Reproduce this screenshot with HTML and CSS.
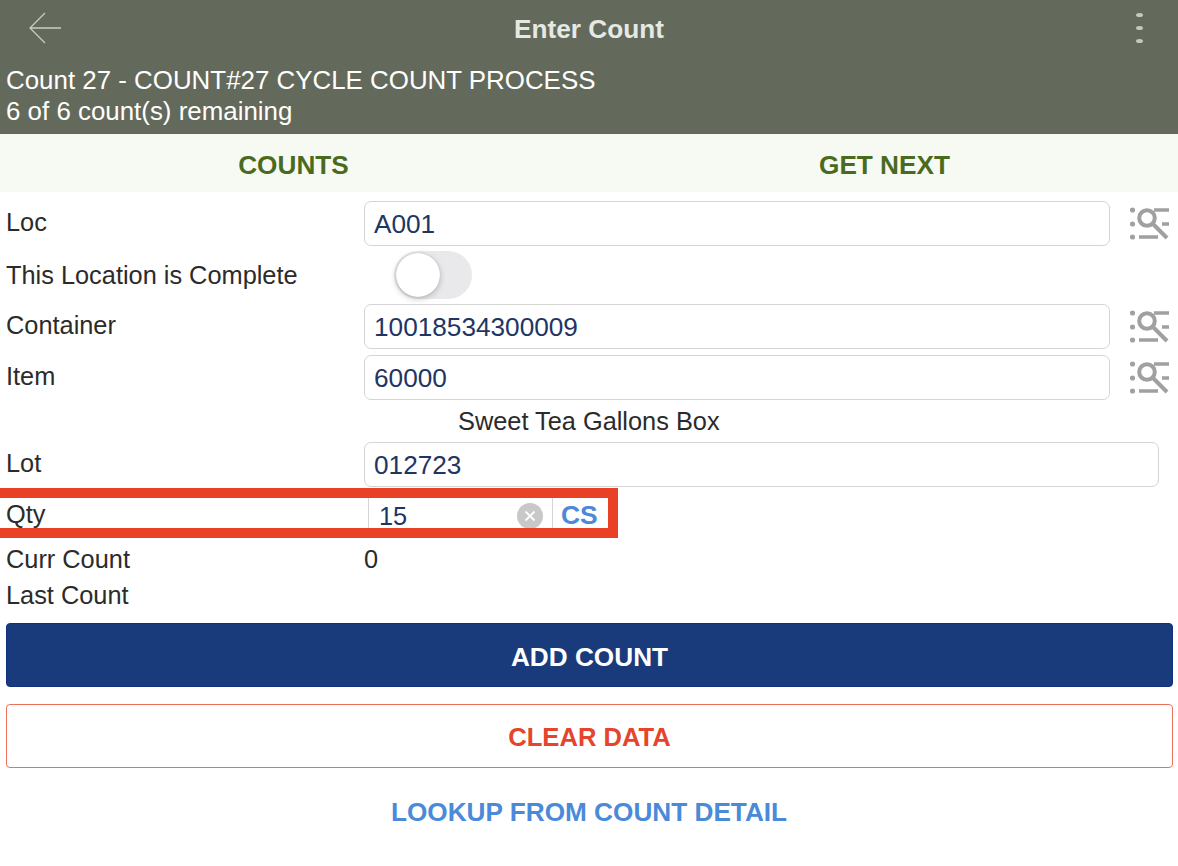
FILE: index.html
```html
<!DOCTYPE html>
<html lang="en">
<head>
<meta charset="utf-8">
<title>Enter Count</title>
<link rel="stylesheet" href="styles.css">
</head>
<body>
<header class="header">
  <div class="topbar">
    <svg class="back" width="33" height="32" viewBox="0 0 33 32"><path d="M16 1 L1 16 L16 31 M1 16 H32" fill="none" stroke="#c9ccc5" stroke-width="1.3"/></svg>
    <div class="title">Enter Count</div>
    <div class="dots"><span></span><span></span><span></span></div>
  </div>
  <div class="subtitle">Count 27 - COUNT#27 CYCLE COUNT PROCESS<br>6 of 6 count(s) remaining</div>
</header>
<nav class="tabs"><div class="tab tab-a">COUNTS</div><div class="tab tab-b">GET NEXT</div></nav>
<main class="form">
  <div class="row row-loc">
    <label class="label">Loc</label>
    <div class="input">A001</div>
    <svg class="search" width="40" height="36" viewBox="0 0 40 36"><use href="#lookup"/></svg>
  </div>
  <div class="row row-toggle">
    <label class="label">This Location is Complete</label>
    <div class="toggle"><div class="knob"></div></div>
  </div>
  <div class="row row-container">
    <label class="label">Container</label>
    <div class="input">10018534300009</div>
    <svg class="search" width="40" height="36" viewBox="0 0 40 36"><use href="#lookup"/></svg>
  </div>
  <div class="row row-item">
    <label class="label">Item</label>
    <div class="input">60000</div>
    <svg class="search" width="40" height="36" viewBox="0 0 40 36"><use href="#lookup"/></svg>
  </div>
  <div class="desc">Sweet Tea Gallons Box</div>
  <div class="row row-lot">
    <label class="label">Lot</label>
    <div class="input input-wide">012723</div>
  </div>
  <div class="row row-qty">
    <label class="label">Qty</label>
    <div class="qty-field">
      <span class="qty-value">15</span>
      <svg class="clear" width="26" height="26" viewBox="0 0 26 26"><circle cx="13" cy="13" r="13" fill="#c8c8c8"/><path d="M8.5 8.5 L17.5 17.5 M17.5 8.5 L8.5 17.5" stroke="#fff" stroke-width="1.8"/></svg>
    </div>
    <div class="uom">CS</div>
    <div class="highlight"></div>
  </div>
  <div class="info info-curr"><span class="label">Curr Count</span><span>0</span></div>
  <div class="info info-last"><span class="label">Last Count</span></div>
  <button class="btn btn-add">ADD COUNT</button>
  <button class="btn btn-clear">CLEAR DATA</button>
  <div class="lookup">LOOKUP FROM COUNT DETAIL</div>
</main>
<svg class="defs" width="0" height="0">
  <defs>
    <g id="lookup" fill="none" stroke="#a0a0a0">
      <circle cx="2.5" cy="5" r="2.6" fill="#a0a0a0" stroke="none"/>
      <circle cx="2.5" cy="19" r="2.6" fill="#a0a0a0" stroke="none"/>
      <circle cx="2.5" cy="32" r="2.6" fill="#a0a0a0" stroke="none"/>
      <circle cx="17" cy="13" r="7.8" stroke-width="4"/>
      <path d="M23 19 L37 33" stroke-width="4"/>
      <path d="M24 5 H39 M32 19 H39 M9 32 H28" stroke-width="3.4"/>
    </g>
  </defs>
</svg>
</body>
</html>
```
FILE: styles.css
```css
* { box-sizing: border-box; }
html, body { margin: 0; padding: 0; }
body {
  width: 1178px;
  height: 866px;
  overflow: hidden;
  background: #fff;
  font-family: "Liberation Sans", Arial, sans-serif;
  color: #2b2b2b;
  font-size: 25.35px;
}
.header { background: #636a5b; height: 134px; }
.topbar {
  height: 60px;
  display: flex;
  align-items: center;
  justify-content: space-between;
  padding: 0 34px 4px 29px;
}
.back { display: block; }
.title {
  flex: 1;
  text-align: center;
  color: #e6e8e3;
  font-weight: 700;
  font-size: 26.2px;
  padding: 3px 20px 0 0;
}
.dots { display: flex; flex-direction: column; gap: 9px; width: 8px; }
.dots span { display: block; width: 7px; height: 4px; border-radius: 50%; background: #c4c8c0; }
.subtitle {
  padding: 5px 6px 0;
  color: #fff;
  font-size: 25.9px;
  line-height: 31px;
}
.tabs {
  height: 58px;
  display: flex;
  background: #f7faf3;
  color: #4a6b1e;
  font-weight: 700;
  font-size: 26.2px;
  align-items: center;
  padding-top: 4px;
}
.tab { width: 50%; text-align: center; }
.tab-a { padding-right: 2px; }
.tab-b { padding-left: 2px; }
.form { padding: 0 6px; }
.row { display: flex; align-items: flex-start; position: relative; }
.label { display: block; width: 358px; flex: none; color: #2b2b2b; }
.row-loc { margin-top: 9px; height: 45px; }
.row-toggle { margin-top: 5px; height: 48px; align-items: center; }
.row-container { margin-top: 5px; height: 45px; }
.row-item { margin-top: 6px; height: 45px; }
.row .label { line-height: 42px; }
.input {
  width: 746px;
  height: 45px;
  border: 1px solid #d4d4d4;
  border-radius: 7px;
  padding: 1px 9px 0;
  line-height: 43px;
  font-size: 26.2px;
  color: #1f3564;
  background: #fff;
}
.input-wide { width: 795px; }
.search { margin-left: 20px; margin-top: 4px; flex: none; }
.toggle {
  width: 78px;
  height: 48px;
  margin-left: 30px;
  background: #e9e9eb;
  border-radius: 24px;
  padding: 2px;
}
.knob {
  width: 44px;
  height: 44px;
  background: #fff;
  border-radius: 50%;
  box-shadow: 0 2px 6px rgba(0, 0, 0, .22), 0 0 1px rgba(0, 0, 0, .25);
}
.desc { margin: 0 0 0 452px; padding-top: 5px; height: 42px; line-height: 32px; color: #2b2b2b; }
.row-qty { margin-top: 11px; height: 30px; align-items: center; }
.row-qty .label { line-height: 30px; padding-top: 2px; }
.qty-field {
  width: 185px;
  height: 30px;
  margin-left: 4px;
  padding: 5px 0 0 10px;
  border-left: 1px solid #d4d4d4;
  border-right: 1px solid #d4d4d4;
  display: flex;
  align-items: center;
  justify-content: space-between;
  color: #1f3564;
  line-height: 30px;
  flex: none;
}
.clear { margin-right: 9px; }
.uom { margin-left: 8px; padding-top: 4px; color: #4a8ad8; font-weight: 700; font-size: 26.4px; }
.highlight {
  position: absolute;
  left: -6px;
  top: -10px;
  width: 618px;
  height: 50px;
  border: 10px solid #e94125;
  border-left: none;
  pointer-events: none;
}
.info { display: flex; }
.info .label { line-height: 36px; }
.info span:last-child { line-height: 36px; }
.info-curr { margin-top: 13px; height: 36px; }
.info-last { height: 36px; }
.btn {
  display: block;
  width: 1167px;
  height: 64px;
  border-radius: 4px;
  font-family: inherit;
  font-weight: 700;
  font-size: 26.2px;
  text-align: center;
}
.btn-add { margin-top: 10px; padding: 4px 0 0; background: #1a3b7b; border: 1px solid #0f2f7f; color: #fff; }
.btn-clear { margin-top: 17px; padding: 2px 0 0; background: #fff; border: 1px solid #ee6f5c; color: #e5452c; font-size: 25.6px; }
.lookup {
  margin-top: 27px;
  text-align: center;
  color: #4a8ad8;
  font-weight: 700;
  font-size: 26.2px;
  line-height: 34px;
}
.defs { position: absolute; }
```
